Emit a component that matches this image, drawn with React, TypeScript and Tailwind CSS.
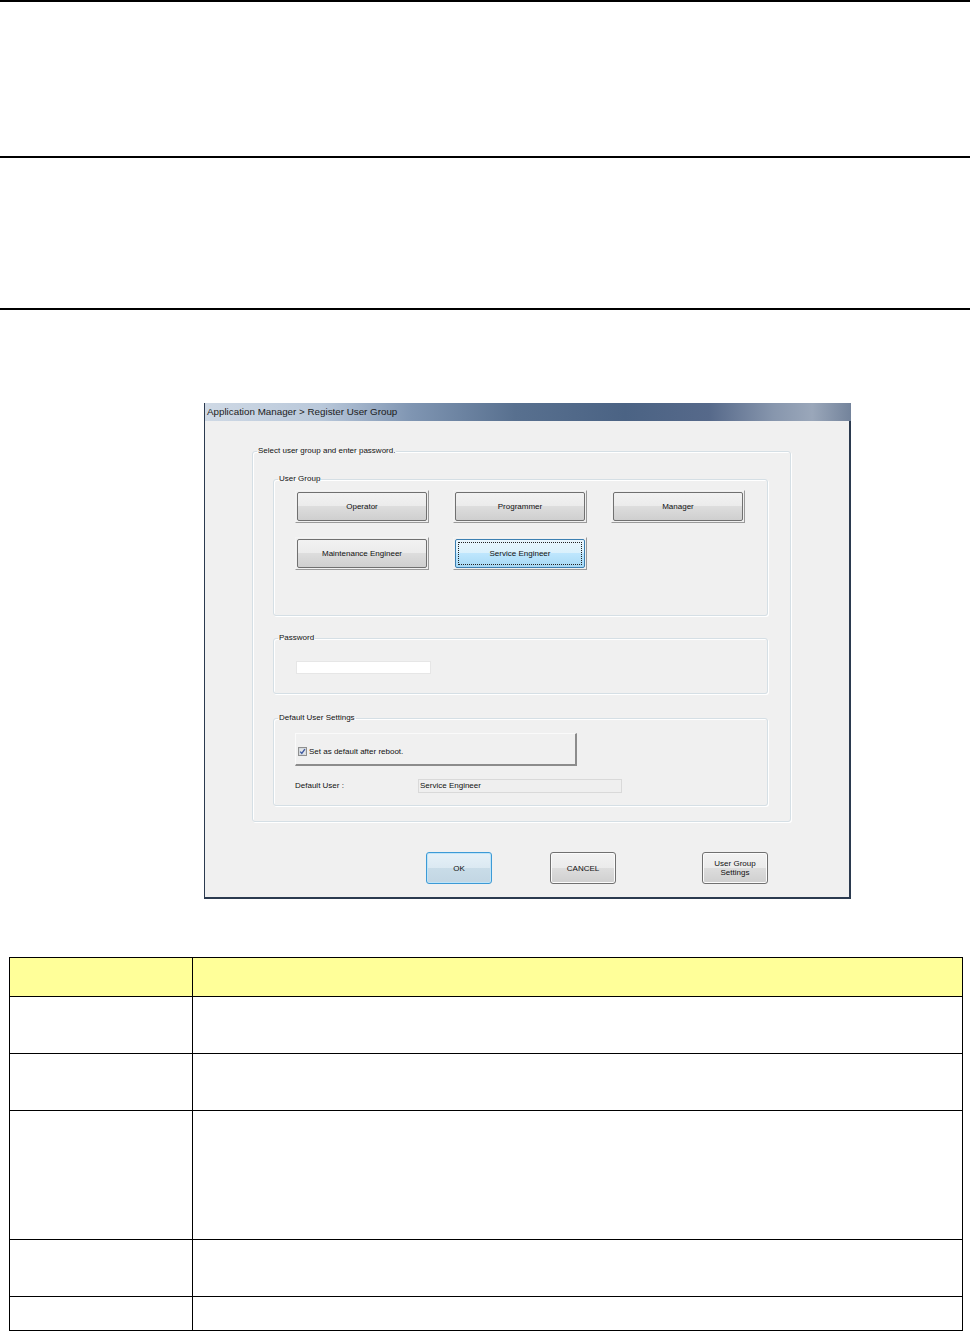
import React from "react";

const font = { fontFamily: '"Liberation Sans", Arial, sans-serif' };

function WinButton({
  children,
  selected = false,
}: {
  children: React.ReactNode;
  selected?: boolean;
}) {
  return (
    <div className="w-[134px] h-[33px] border border-t-[#f4f4f4] border-l-[#f4f4f4] border-r-[#9a9a9a] border-b-[#9a9a9a] p-px">
      <div
        className={`relative h-full w-full rounded-[2px] border flex items-center justify-center text-[8px] leading-[9px] text-center text-[#111] ${
          selected
            ? "border-[#3c7fb1] bg-[linear-gradient(180deg,#eaf6fd_0%,#d9f0fc_50%,#bee6fd_50%,#a7d9f5_100%)]"
            : "border-[#707070] bg-[linear-gradient(180deg,#f2f2f2_0%,#ebebeb_50%,#dddddd_50%,#cfcfcf_100%)]"
        }`}
      >
        {selected && (
          <div className="absolute inset-[2px] border border-dotted border-[#222]" />
        )}
        <span className="relative">{children}</span>
      </div>
    </div>
  );
}

function DialogButton({
  children,
  primary = false,
}: {
  children: React.ReactNode;
  primary?: boolean;
}) {
  return (
    <div
      className={`w-[66px] h-[32px] rounded-[3px] border flex items-center justify-center text-[8px] leading-[9px] text-center text-[#111] ${
        primary
          ? "border-[#3c9ad6] shadow-[inset_0_0_0_1px_#bfe4f8] bg-[linear-gradient(180deg,#e6f1f8_0%,#dbe9f2_50%,#c9dce8_50%,#c2d6e3_100%)]"
          : "border-[#707070] shadow-[inset_0_0_0_1px_#fbfbfb] bg-[linear-gradient(180deg,#f2f2f2_0%,#ebebeb_50%,#dddddd_50%,#cfcfcf_100%)]"
      }`}
    >
      {children}
    </div>
  );
}

// Windows style group box; padding goes on the inner div so the legend stays near the corner
function GroupBox({
  label,
  className = "",
  inner = "",
  children,
}: {
  label: string;
  className?: string;
  inner?: string;
  children: React.ReactNode;
}) {
  return (
    <fieldset
      className={`rounded-[3px] border border-[#d5dfe5] shadow-[inset_1px_1px_0_#ffffff,1px_1px_0_#ffffff] ${className}`}
    >
      <legend className="ml-[4px] px-[1px] text-[8px] leading-[10px] text-[#111]">{label}</legend>
      <div className={inner}>{children}</div>
    </fieldset>
  );
}

function CheckBox() {
  return (
    <svg width="9" height="9" viewBox="0 0 9 9" className="shrink-0">
      <rect x="0.5" y="0.5" width="8" height="8" fill="#f4f4f4" stroke="#8e8f8f" />
      <rect x="1.5" y="1.5" width="6" height="6" fill="#e2e6ea" stroke="#c9cdd2" strokeWidth="0.6" />
      <path d="M2.2 4.6 L3.8 6.4 L6.9 2.2" fill="none" stroke="#3f5aa0" strokeWidth="1.4" />
    </svg>
  );
}

function Dialog() {
  return (
    <div className="ml-[204px] w-[647px]" style={font}>
      {/* title bar */}
      <div className="h-[18px] flex items-center pl-[2px] border-l border-[#2b3a4f] bg-[linear-gradient(90deg,#cfd9e5_0%,#b9c8da_18%,#7f95b2_32%,#58708f_48%,#4b6384_65%,#56698a_78%,#8796ad_88%,#9aa7ba_94%,#73839b_100%)]">
        <span className="text-[9.8px] leading-[12px] text-[#1b1b1b] whitespace-nowrap">
          Application Manager &gt; Register User Group
        </span>
      </div>

      {/* body */}
      <div className="bg-[#f0f0f0] border-l border-r-2 border-b-2 border-[#2b3a4f] pt-[25px] pb-[13px]">
        <GroupBox
          label="Select user group and enter password."
          className="ml-[47px] w-[539px]"
          inner="pl-[20px] pr-[22px] pb-[15px]"
        >
          <GroupBox label="User Group" className="mt-[18px] w-[495px]" inner="pl-[21px] pt-[6px] pb-[45px]">
            <div className="grid grid-cols-[134px_134px_134px] gap-x-[24px] gap-y-[14px]">
              <WinButton>Operator</WinButton>
              <WinButton>Programmer</WinButton>
              <WinButton>Manager</WinButton>
              <WinButton>Maintenance Engineer</WinButton>
              <WinButton selected>Service Engineer</WinButton>
            </div>
          </GroupBox>

          <GroupBox label="Password" className="mt-[17px] w-[495px]" inner="pl-[22px] pt-[18px] pb-[19px]">
            <div className="w-[135px] h-[13px] bg-white border border-[#e6e6e6]" />
          </GroupBox>

          <GroupBox label="Default User Settings" className="mt-[19px] w-[495px]" inner="pl-[21px] pt-[10px] pb-[13px]">
            <div className="w-[282px] h-[33px] border-t border-l border-t-[#fafafa] border-l-[#fafafa] border-r-2 border-b-2 border-r-[#8c8c8c] border-b-[#8c8c8c] flex items-end pb-[8px] pl-[2px] gap-[2px]">
              <CheckBox />
              <span className="text-[8px] leading-[9px] text-[#111]">Set as default after reboot.</span>
            </div>
            <div className="mt-[13px] flex items-center h-[13px]">
              <span className="w-[123px] text-[8px] leading-[9px] text-[#111]">Default User :</span>
              <div className="w-[204px] h-[14px] border border-[#d9d9d9] bg-[#efefef] flex items-center pl-[1px] text-[8px] leading-[9px] text-[#111]">
                Service Engineer
              </div>
            </div>
          </GroupBox>
        </GroupBox>

        <div className="mt-[30px] flex pl-[221px]">
          <DialogButton primary>OK</DialogButton>
          <div className="ml-[58px]">
            <DialogButton>CANCEL</DialogButton>
          </div>
          <div className="ml-[86px]">
            <DialogButton>
              User Group
              <br />
              Settings
            </DialogButton>
          </div>
        </div>
      </div>
    </div>
  );
}

const rows = ["h-[57px]", "h-[57px]", "h-[129px]", "h-[57px]", "h-[34px]"];

export default function App() {
  return (
    <div className="w-[970px] h-[1331px] bg-white overflow-hidden" style={font}>
      <div className="h-[2px] bg-black" />
      <div className="h-[154px]" />
      <div className="h-[2px] bg-black" />
      <div className="h-[150px]" />
      <div className="h-[2px] bg-black" />
      <div className="h-[93px]" />

      <Dialog />

      <div className="mt-[58px] ml-[9px] w-[954px] border-t border-l border-black">
        <div className="flex h-[39px] bg-[#ffff99] border-b border-black">
          <div className="w-[183px] border-r border-black" />
          <div className="flex-1 border-r border-black" />
        </div>
        {rows.map((h, i) => (
          <div key={i} className={`flex ${h} border-b border-black`}>
            <div className="w-[183px] border-r border-black" />
            <div className="flex-1 border-r border-black" />
          </div>
        ))}
      </div>
    </div>
  );
}
